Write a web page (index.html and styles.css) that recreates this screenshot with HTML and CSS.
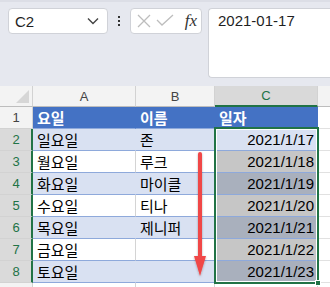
FILE: index.html
```html
<!DOCTYPE html>
<html lang="ko">

<head>
  <meta charset="UTF-8">
  <title>일자 채우기</title>
  <link rel="stylesheet" href="styles.css">
</head>

<body>
  <div class="app">
    <header class="toolbar">
      <div class="name-box">
        <span>C2</span>
        <svg class="chevron" width="12" height="8" viewBox="0 0 12 8"><path d="M1 1.5 L6 6.5 L11 1.5" fill="none" stroke="#444" stroke-width="1.4"/></svg>
      </div>
      <div class="dots"><i></i><i></i><i></i></div>
      <div class="fx-buttons">
        <svg width="16" height="16" viewBox="0 0 16 16"><path d="M2 2 L14 14 M14 2 L2 14" stroke="#bdbdbd" stroke-width="1.3"/></svg>
        <svg width="18" height="16" viewBox="0 0 18 16"><path d="M1 7 L6 12 L17 2" fill="none" stroke="#bdbdbd" stroke-width="1.3"/></svg>
        <span class="fx">fx</span>
      </div>
      <div class="formula">2021-01-17</div>
    </header>

    <main class="sheet">
      <div class="corner"><span class="tri"></span></div>
      <div class="col-head">A</div>
      <div class="col-head">B</div>
      <div class="col-head active">C</div>
      <div class="col-head blank"></div>

      <div class="row-head">1</div>
      <div class="cell title">요일</div>
      <div class="cell title">이름</div>
      <div class="cell title">일자</div>
      <div class="cell empty"></div>

      <div class="row-head sel">2</div>
      <div class="cell band">일요일</div>
      <div class="cell band">존</div>
      <div class="cell date active-cell">2021/1/17</div>
      <div class="cell empty"></div>

      <div class="row-head sel">3</div>
      <div class="cell">월요일</div>
      <div class="cell">루크</div>
      <div class="cell date dim">2021/1/18</div>
      <div class="cell empty"></div>

      <div class="row-head sel">4</div>
      <div class="cell band">화요일</div>
      <div class="cell band">마이클</div>
      <div class="cell date dim-band">2021/1/19</div>
      <div class="cell empty"></div>

      <div class="row-head sel">5</div>
      <div class="cell">수요일</div>
      <div class="cell">티나</div>
      <div class="cell date dim">2021/1/20</div>
      <div class="cell empty"></div>

      <div class="row-head sel">6</div>
      <div class="cell band">목요일</div>
      <div class="cell band">제니퍼</div>
      <div class="cell date dim-band">2021/1/21</div>
      <div class="cell empty"></div>

      <div class="row-head sel">7</div>
      <div class="cell">금요일</div>
      <div class="cell"></div>
      <div class="cell date dim">2021/1/22</div>
      <div class="cell empty"></div>

      <div class="row-head sel">8</div>
      <div class="cell band">토요일</div>
      <div class="cell band"></div>
      <div class="cell date dim-band">2021/1/23</div>
      <div class="cell empty"></div>

      <div class="row-head"></div>
      <div class="cell plain"></div>
      <div class="cell plain"></div>
      <div class="cell plain"></div>
      <div class="cell empty"></div>

      <div class="selection"></div>
      <div class="fill-handle"></div>
      <svg class="arrow" width="20" height="130" viewBox="0 0 20 130">
        <defs>
          <filter id="sh" x="-50%" y="-10%" width="200%" height="120%">
            <feDropShadow dx="0" dy="1" stdDeviation="1" flood-color="#000" flood-opacity="0.3"/>
          </filter>
        </defs>
        <g filter="url(#sh)">
          <rect x="8" y="2" width="4" height="108" rx="2" fill="#f04646"/>
          <path d="M4 106 L16 106 L10 126 Z" fill="#f04646"/>
        </g>
      </svg>
    </main>
  </div>
</body>

</html>
```

FILE: styles.css
```css
body {
  margin: 0;
  background: #fff;
  font-family: "Liberation Sans", "Noto Sans CJK KR", sans-serif;
}

.app {
  width: 330px;
  height: 287px;
  overflow: hidden;
}

.toolbar {
  height: 86px;
  box-sizing: border-box;
  background: #e6e8ef;
  border-top: 2px solid #dcdee6;
  padding: 6px 0 0 8px;
  display: flex;
  align-items: flex-start;
}

.name-box {
  width: 100px;
  height: 26px;
  box-sizing: border-box;
  background: #fff;
  border: 1px solid #d0d2d8;
  border-radius: 4px;
  display: flex;
  align-items: center;
  justify-content: space-between;
  padding: 0 8px 0 6px;
  font-size: 15px;
  color: #1f1f1f;
}

.dots {
  width: 22px;
  height: 26px;
  display: flex;
  flex-direction: column;
  align-items: center;
  justify-content: center;
  gap: 2px;
}

.dots i {
  width: 2px;
  height: 2px;
  background: #333;
}

.fx-buttons {
  width: 72px;
  height: 26px;
  box-sizing: border-box;
  background: #fff;
  border: 1px solid #d0d2d8;
  border-radius: 4px;
  display: flex;
  align-items: center;
  padding: 0 4px 0 5px;
  gap: 4px;
}

.fx {
  margin-left: auto;
  font-family: "Liberation Serif", serif;
  font-style: italic;
  font-size: 17px;
  color: #333;
}

.formula {
  margin-left: 6px;
  flex: 1;
  height: 70px;
  box-sizing: border-box;
  background: #fff;
  border: 1px solid #d0d2d8;
  border-right: 0;
  border-radius: 4px 0 0 4px;
  padding: 3px 0 0 9px;
  font-size: 15px;
  color: #1f1f1f;
}

.sheet {
  position: relative;
  display: grid;
  grid-template-columns: 33px 103px 79px 103px 1fr;
  grid-template-rows: 21px repeat(9, 22px);
  font-size: 15px;
}

.sheet > div {
  box-sizing: border-box;
}

.corner {
  background: #f3f3f3;
  border-right: 1px solid #d2d2d2;
  border-bottom: 1px solid #bdbdbd;
  position: relative;
}

.tri {
  position: absolute;
  right: 3px;
  bottom: 3px;
  width: 0;
  height: 0;
  border-left: 13px solid transparent;
  border-bottom: 13px solid #d6d6d6;
}

.col-head {
  background: #f3f3f3;
  border-right: 1px solid #d2d2d2;
  border-bottom: 1px solid #bdbdbd;
  display: flex;
  align-items: center;
  justify-content: center;
  font-size: 13px;
  color: #444;
}

.col-head.active {
  background: #d9d9d9;
  border-bottom: 2px solid #217346;
  color: #217346;
}

.col-head.blank {
  border-right: 0;
}

.row-head {
  background: #f3f3f3;
  border-right: 1px solid #d2d2d2;
  border-bottom: 1px solid #d2d2d2;
  display: flex;
  align-items: center;
  justify-content: center;
  font-size: 13px;
  color: #444;
}

.row-head.sel {
  background: #dadada;
  color: #217346;
  border-right: 2px solid #217346;
  padding-left: 1px;
}

.cell {
  display: flex;
  align-items: center;
  padding: 0 4px;
  background: #fff;
  border-right: 1px solid #d4d4d4;
  border-bottom: 1px solid #8ea9db;
  color: #000;
  white-space: nowrap;
  font-family: "Noto Sans CJK KR", "Liberation Sans", sans-serif;
}

.cell.title {
  background: #4472c4;
  border-right-color: #4472c4;
  color: #fff;
  font-weight: bold;
}

.cell.band {
  background: #d9e1f2;
  border-right-color: #d9e1f2;
}

.cell.date {
  justify-content: flex-end;
  font-family: "Liberation Sans", sans-serif;
  padding-right: 3px;
}

.cell.active-cell {
  background: #d9e1f2;
}

.cell.dim {
  background: #c6c6c6;
}

.cell.dim-band {
  background: #a9b0bd;
}

.cell.empty {
  border-right: 0;
  border-bottom: 1px solid #e1e1e1;
}

.cell.plain {
  border-bottom: 1px solid #e1e1e1;
}

.selection {
  position: absolute;
  left: 214px;
  top: 41px;
  width: 105px;
  height: 157px;
  box-sizing: border-box;
  border: 2px solid #217346;
  box-shadow: inset 0 0 0 1px #fff;
}

.fill-handle {
  position: absolute;
  left: 315px;
  top: 194px;
  width: 6px;
  height: 6px;
  background: #217346;
  border: 1px solid #fff;
}

.arrow {
  position: absolute;
  left: 190px;
  top: 64px;
}
```
